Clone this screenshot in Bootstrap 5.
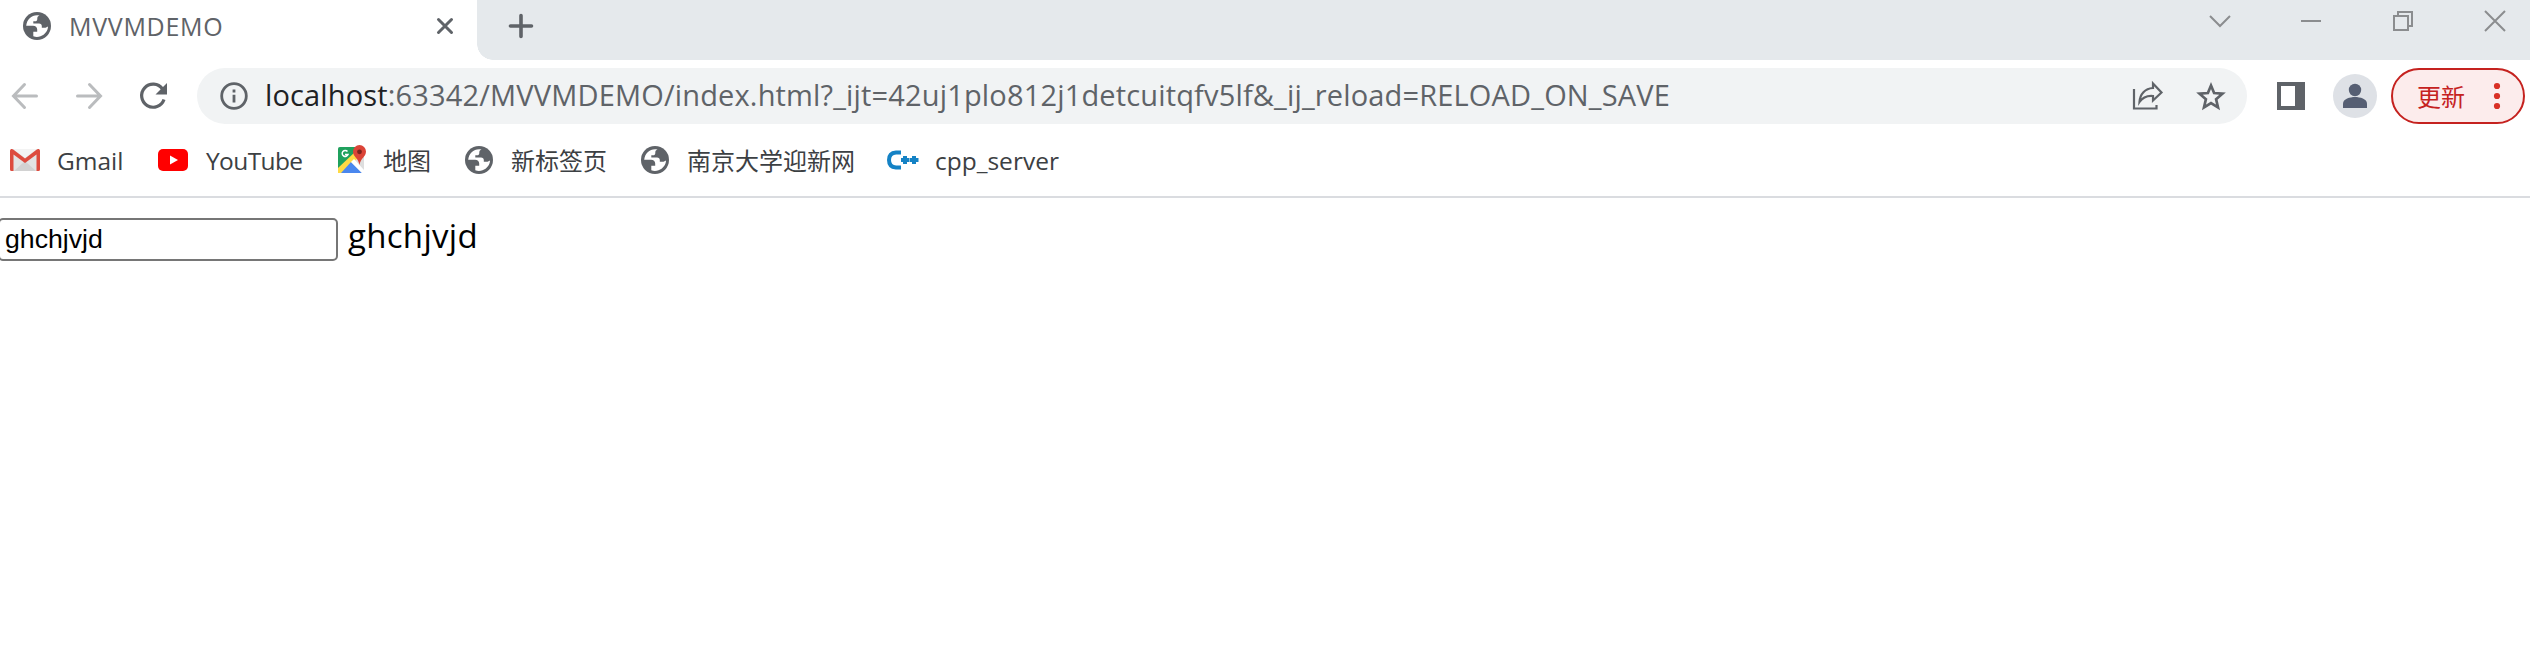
<!DOCTYPE html>
<html lang="zh-CN">
<head>
<meta charset="utf-8">
<title>MVVMDEMO</title>
<link href="https://cdn.jsdelivr.net/npm/bootstrap@5.3.0/dist/css/bootstrap.min.css" rel="stylesheet">
<style>
body{font-family:"Open Sans","Noto Sans CJK SC",sans-serif;background:#fff;color:#3c4043;overflow:hidden}
svg{display:block;flex:none;overflow:visible}
.strip{height:60px;background:#e5e9ec}
.tab-active{width:477px;height:60px;padding:0 0 8px 23px;background:#fff;position:relative}
.tab-active::after{content:"";position:absolute;left:100%;bottom:0;width:16px;height:16px;background:radial-gradient(circle at 100% 0,transparent 15.5px,#fff 16px)}
.tab-title{width:369px;margin-left:18px;font-size:25px;letter-spacing:.7px;line-height:52px;color:#5f6368}
.toolbar{height:72px;padding:0 5px 0 12px}
.omnibox{width:2050px;height:56px;background:#f1f3f4;padding:0 21px 0 23px}
.url{font-size:29px;line-height:54px;height:56px;color:#5f6368;letter-spacing:.16px;white-space:nowrap;margin-left:17px}
.url b{font-weight:400;color:#202124;letter-spacing:.15px}
.avatar{width:44px;height:44px;background:#dee1e6;margin-left:28px}
.update{width:134px;height:56px;border:2px solid #c5221f;background:#fcecec;color:#c5221f;margin-left:14px;padding-left:24px;font-size:24px;font-family:"Noto Sans CJK SC",sans-serif}
.bookmarks{height:66px;padding:0 0 6px 10px;border-bottom:2px solid #dadce0;font-size:24.5px;line-height:56px;white-space:nowrap}
.bm{height:56px}
.bm>span{padding-top:1px}
.bm>.cjk{padding-top:0;font-size:24px;font-family:"Noto Sans CJK SC",sans-serif}
.view{padding-top:20px;color:#000}
.field{width:340px;height:43px;margin-left:-2px;border:2px solid #767676;border-radius:5px;padding:0 5px;font:26.67px "Liberation Sans",sans-serif;color:#000;background:#fff}
.echo{font-size:33px;line-height:36px;letter-spacing:.3px;margin-left:10px}
</style>
</head>
<body>
<svg width="0" height="0" class="position-absolute"><defs>
<symbol id="globe" viewBox="0 0 28 28"><circle cx="14" cy="14" r="14" fill="#5f6368"/><path fill="#fff" d="M14.500 3.200C8.500 3 3.800 7.500 3.200 13.800H10C12.500 13.800 14.200 15.300 14.200 17.500V19.800H10.300V24.300C13 25.300 15.500 25 17.500 24.300C22 22.800 25 18.800 25 14.600L22.500 15.800H18.800V14C18.800 12.300 17.800 11.400 16 11.400H10.300V9.300H12C13.500 9.300 14.300 8.500 14.300 7V5.800Q14.300 4.500 16.500 3.500Z"/></symbol>
</defs></svg>

<header>
<div class="strip d-flex">
  <div class="tab-active d-flex align-items-center">
    <svg width="28" height="28"><use href="#globe"/></svg>
    <div class="tab-title">MVVMDEMO</div>
    <svg width="16" height="16"><path d="M.5 1.500 13.500 14.500M13.500 1.500 .5 14.500" stroke="#5f6368" stroke-width="3" stroke-linecap="round"/></svg>
  </div>
  <svg width="24" height="24" style="margin:14px 0 0 32px"><path d="M12 1.500V22.500M1.500 12H22.500" stroke="#5f6368" stroke-width="3.600" stroke-linecap="round"/></svg>
  <div class="ms-auto d-flex" style="padding:11px 25px 0 0;gap:72px">
    <svg width="20" height="20" fill="none" stroke="#8b8d8f" stroke-width="2"><path d="M1 5 11 15 21 5"/></svg>
    <svg width="20" height="20" fill="none" stroke="#8b8d8f" stroke-width="2"><path d="M0 10H20"/></svg>
    <svg width="20" height="20" fill="none" stroke="#8b8d8f" stroke-width="2"><path d="M1 5H15V19H1ZM5 5V1H19V15H15"/></svg>
    <svg width="20" height="20" fill="none" stroke="#8b8d8f" stroke-width="2"><path d="M0 0 20 20M20 0 0 20"/></svg>
  </div>
</div>

<div class="toolbar d-flex align-items-center">
  <svg width="26" height="26" fill="none" stroke="#babcbe" stroke-width="3" stroke-linecap="round"><path d="M24.500 13H2M12.500 1.500 1.500 13 12.500 24.500"/></svg>
  <svg width="26" height="26" fill="none" stroke="#babcbe" stroke-width="3" stroke-linecap="round" style="margin-left:38px"><path d="M1.500 13H24M13.500 1.500 24.500 13 13.500 24.500"/></svg>
  <svg width="27" height="26" style="margin-left:38px"><path d="M22.500 6A11.500 11.500 0 1 0 24 16.500" fill="none" stroke="#5f6368" stroke-width="3.200"/><path d="M27 0V11.500H15.500Z" fill="#5f6368"/></svg>
  <div class="omnibox rounded-pill d-flex align-items-center" style="margin-left:30px">
    <svg width="28" height="28"><circle cx="14" cy="14" r="12.300" fill="none" stroke="#5f6368" stroke-width="2.800"/><path d="M14 7.500V10.500M14 12.800V20.500" stroke="#5f6368" stroke-width="2.800"/></svg>
    <div class="url"><b>localhost</b>:63342/MVVMDEMO/index.html?_ijt=42uj1plo812j1detcuitqfv5lf&amp;_ij_reload=RELOAD_ON_SAVE</div>
    <svg class="ms-auto" width="30" height="28" fill="none" stroke="#5f6368" stroke-width="2.200"><path d="M1 7V26.500H23.500V23"/><path d="M20 1.500 28.500 10.500 20 18.500V14C14 13.500 9.500 15.500 6.500 20C7 12 12 6.500 20 6Z"/></svg>
    <svg width="30" height="29" fill="none" stroke="#5f6368" stroke-width="2.700" style="margin-left:33px"><path d="M15 3.500 18.100 11 26.500 11.700 20.100 17.200 22 25.300 15 21 8 25.300 9.900 17.200 3.500 11.700 11.900 11Z"/></svg>
  </div>
  <svg width="28" height="28" style="margin-left:30px"><path fill="#5f6368" fill-rule="evenodd" d="M0 0H28V28H0ZM4 4V24H18V4Z"/></svg>
  <div class="avatar rounded-circle"><svg width="44" height="44" fill="#565f73"><circle cx="22" cy="16" r="6.200"/><path d="M10 34V29.500C10 25 17 23 22 23S34 25 34 29.500V34Z"/></svg></div>
  <div class="update rounded-pill d-flex align-items-center"><span>更新</span>
    <svg width="6" height="26" fill="#d93025" style="margin-left:29px"><circle cx="3" cy="3" r="3.100"/><circle cx="3" cy="13" r="3.100"/><circle cx="3" cy="23" r="3.100"/></svg>
  </div>
</div>

<nav class="bookmarks d-flex">
  <div class="bm d-flex align-items-center" style="width:148px;gap:17px">
    <svg width="30" height="22"><rect x="1" width="28" height="22" rx="2" fill="#e3e3e3"/><path d="M4 22 15 12 26 22Z" fill="#d2d2d2"/><path d="M3 0H27L15 9Z" fill="#f3f3f3"/><path d="M0 2C0 0 2-.5 3.500.700L15 9.500 26.500.700C28-.5 30 0 30 2V20.500Q30 22 28.500 22H26.500V5.500L15 14 3.500 5.500V22H1.500Q0 22 0 20.500Z" fill="#dd4b3e"/></svg><span>Gmail</span>
  </div>
  <div class="bm d-flex align-items-center" style="width:180px;gap:18px">
    <svg width="30" height="22"><rect width="30" height="22" rx="5" fill="#f00"/><path d="M12 6.500 20 11 12 15.500Z" fill="#fff"/></svg><span style="letter-spacing:-.6px">YouTube</span>
  </div>
  <div class="bm d-flex align-items-center" style="width:127px;gap:17px">
    <svg width="28" height="28" style="margin-top:-2px"><rect y="2" width="26" height="26" rx="2" fill="#dedede"/><path d="M2 2H18L21 9 0 28V4Q0 2 2 2Z" fill="#1fa15d"/><path d="M0 23 17 7 21 12 4 28H0Z" fill="#ffda44"/><path d="M13 17 24 28H3Z" fill="#4a87ee"/><path d="M13 17 16 14 26 25V28H24Z" fill="#fff"/><path d="M9.500 6.500A3 3 0 1 0 10 9.500H7" fill="none" stroke="#fff" stroke-width="1.500"/><path d="M21.500 0A6.500 6.500 0 0 0 15 6.500C15 12 20.500 13 21.500 20C22.500 13 28 12 28 6.500A6.500 6.500 0 0 0 21.500 0Z" fill="#db4437"/><circle cx="21.500" cy="6.800" r="2.400" fill="#7b231e"/></svg><span class="cjk">地图</span>
  </div>
  <div class="bm d-flex align-items-center" style="width:176px;gap:18px">
    <svg width="28" height="28"><use href="#globe"/></svg><span class="cjk">新标签页</span>
  </div>
  <div class="bm d-flex align-items-center" style="width:246px;gap:18px">
    <svg width="28" height="28"><use href="#globe"/></svg><span class="cjk">南京大学迎新网</span>
  </div>
  <div class="bm d-flex align-items-center" style="gap:16px">
    <svg width="32" height="20"><path d="M14 2.500H9Q2 3 2 10T9 17.500H14" fill="none" stroke="#1482c5" stroke-width="4"/><path d="M14 10H22.500M18 6V14M23 10H31.500M27 6V14" stroke="#1482c5" stroke-width="4"/></svg><span>cpp_server</span>
  </div>
</nav>
</header>

<main class="view d-flex">
  <input class="field" type="text" value="ghchjvjd">
  <div class="echo">ghchjvjd</div>
</main>
<script src="https://cdn.jsdelivr.net/npm/bootstrap@5.3.0/dist/js/bootstrap.bundle.min.js"></script>
</body>
</html>
